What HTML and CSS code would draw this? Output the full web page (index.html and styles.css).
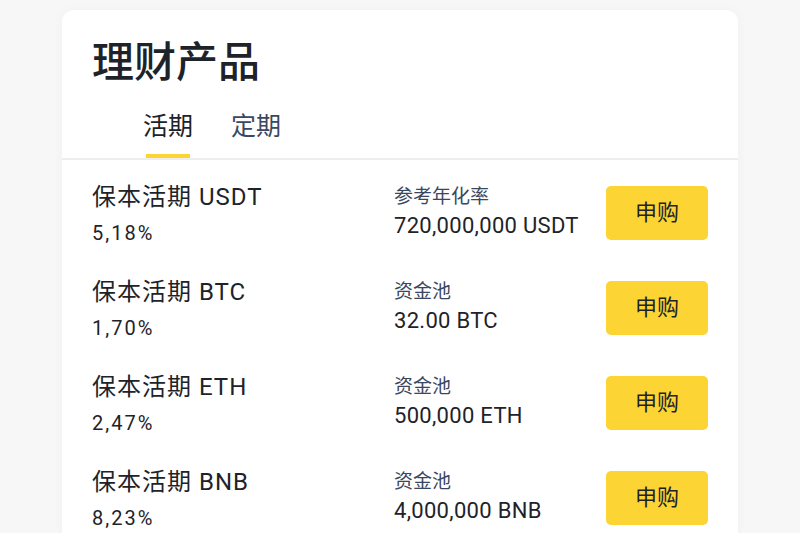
FILE: index.html
```html
<!DOCTYPE html>
<html>
<head>
    <title>理财产品</title>
    <link rel="stylesheet" href="styles.css">
</head>
<body>
    <div class="card">
        <div class="card-title">理财产品</div>
        <div class="tabs">
            <div class="tab active">活期</div>
            <div class="tab">定期</div>
        </div>
        <div class="product-list">
            <div class="product">
                <div class="product-main">
                    <div class="product-name">保本活期 USDT</div>
                    <div class="product-rate">5,18%</div>
                </div>
                <div class="product-info">
                    <div class="info-label">参考年化率</div>
                    <div class="info-value">720,000,000 USDT</div>
                </div>
                <div class="buy-button">申购</div>
            </div>
            <div class="product">
                <div class="product-main">
                    <div class="product-name">保本活期 BTC</div>
                    <div class="product-rate">1,70%</div>
                </div>
                <div class="product-info">
                    <div class="info-label">资金池</div>
                    <div class="info-value">32.00 BTC</div>
                </div>
                <div class="buy-button">申购</div>
            </div>
            <div class="product">
                <div class="product-main">
                    <div class="product-name">保本活期 ETH</div>
                    <div class="product-rate">2,47%</div>
                </div>
                <div class="product-info">
                    <div class="info-label">资金池</div>
                    <div class="info-value">500,000 ETH</div>
                </div>
                <div class="buy-button">申购</div>
            </div>
            <div class="product">
                <div class="product-main">
                    <div class="product-name">保本活期 BNB</div>
                    <div class="product-rate">8,23%</div>
                </div>
                <div class="product-info">
                    <div class="info-label">资金池</div>
                    <div class="info-value">4,000,000 BNB</div>
                </div>
                <div class="buy-button">申购</div>
            </div>
        </div>
    </div>
</body>
</html>
```

FILE: styles.css
```css
body {
    margin: 0;
    background-color: #f7f7f7;
    font-family: Roboto, "Noto Sans CJK SC", sans-serif;
    color: #1e2329;
    overflow: hidden;
    height: 533px;
}
.card {
    width: 676px;
    margin: 10px 0 0 62px;
    background-color: #fff;
    border-radius: 12px;
    box-shadow: 0 0 12px rgba(0, 0, 0, 0.03);
    height: 600px;
}
.card-title {
    padding: 27px 0 0 30px;
    font-size: 42px;
    line-height: 52px;
    font-weight: 500;
}
.tabs {
    display: flex;
    gap: 38px;
    padding: 23px 0 0 81px;
    border-bottom: 2px solid #eeeeee;
}
.tab {
    font-size: 25px;
    line-height: 30px;
    padding-bottom: 16px;
    color: #3b4760;
    position: relative;
}
.tab.active {
    color: #1e2329;
}
.tab.active::after {
    content: "";
    position: absolute;
    left: 3px;
    right: 3px;
    bottom: 0;
    height: 4px;
    background-color: #fcd535;
}
.product-list {
    padding: 22px 30px 0 30px;
}
.product {
    display: flex;
    align-items: flex-start;
    height: 95px;
}
.product-main {
    flex: 1;
}
.product-name {
    font-size: 24px;
    line-height: 30px;
    letter-spacing: 1px;
}
.product-rate {
    font-size: 20px;
    line-height: 30px;
    letter-spacing: 2px;
    margin-top: 6px;
}
.product-info {
    width: 212px;
}
.info-label {
    font-size: 19px;
    line-height: 29px;
    color: #3b4760;
}
.info-value {
    font-size: 22px;
    line-height: 30px;
    letter-spacing: 0.3px;
}
.buy-button {
    width: 102px;
    height: 54px;
    line-height: 54px;
    text-align: center;
    background-color: #fcd535;
    border-radius: 5px;
    font-size: 22px;
    margin-top: 4px;
}
```
